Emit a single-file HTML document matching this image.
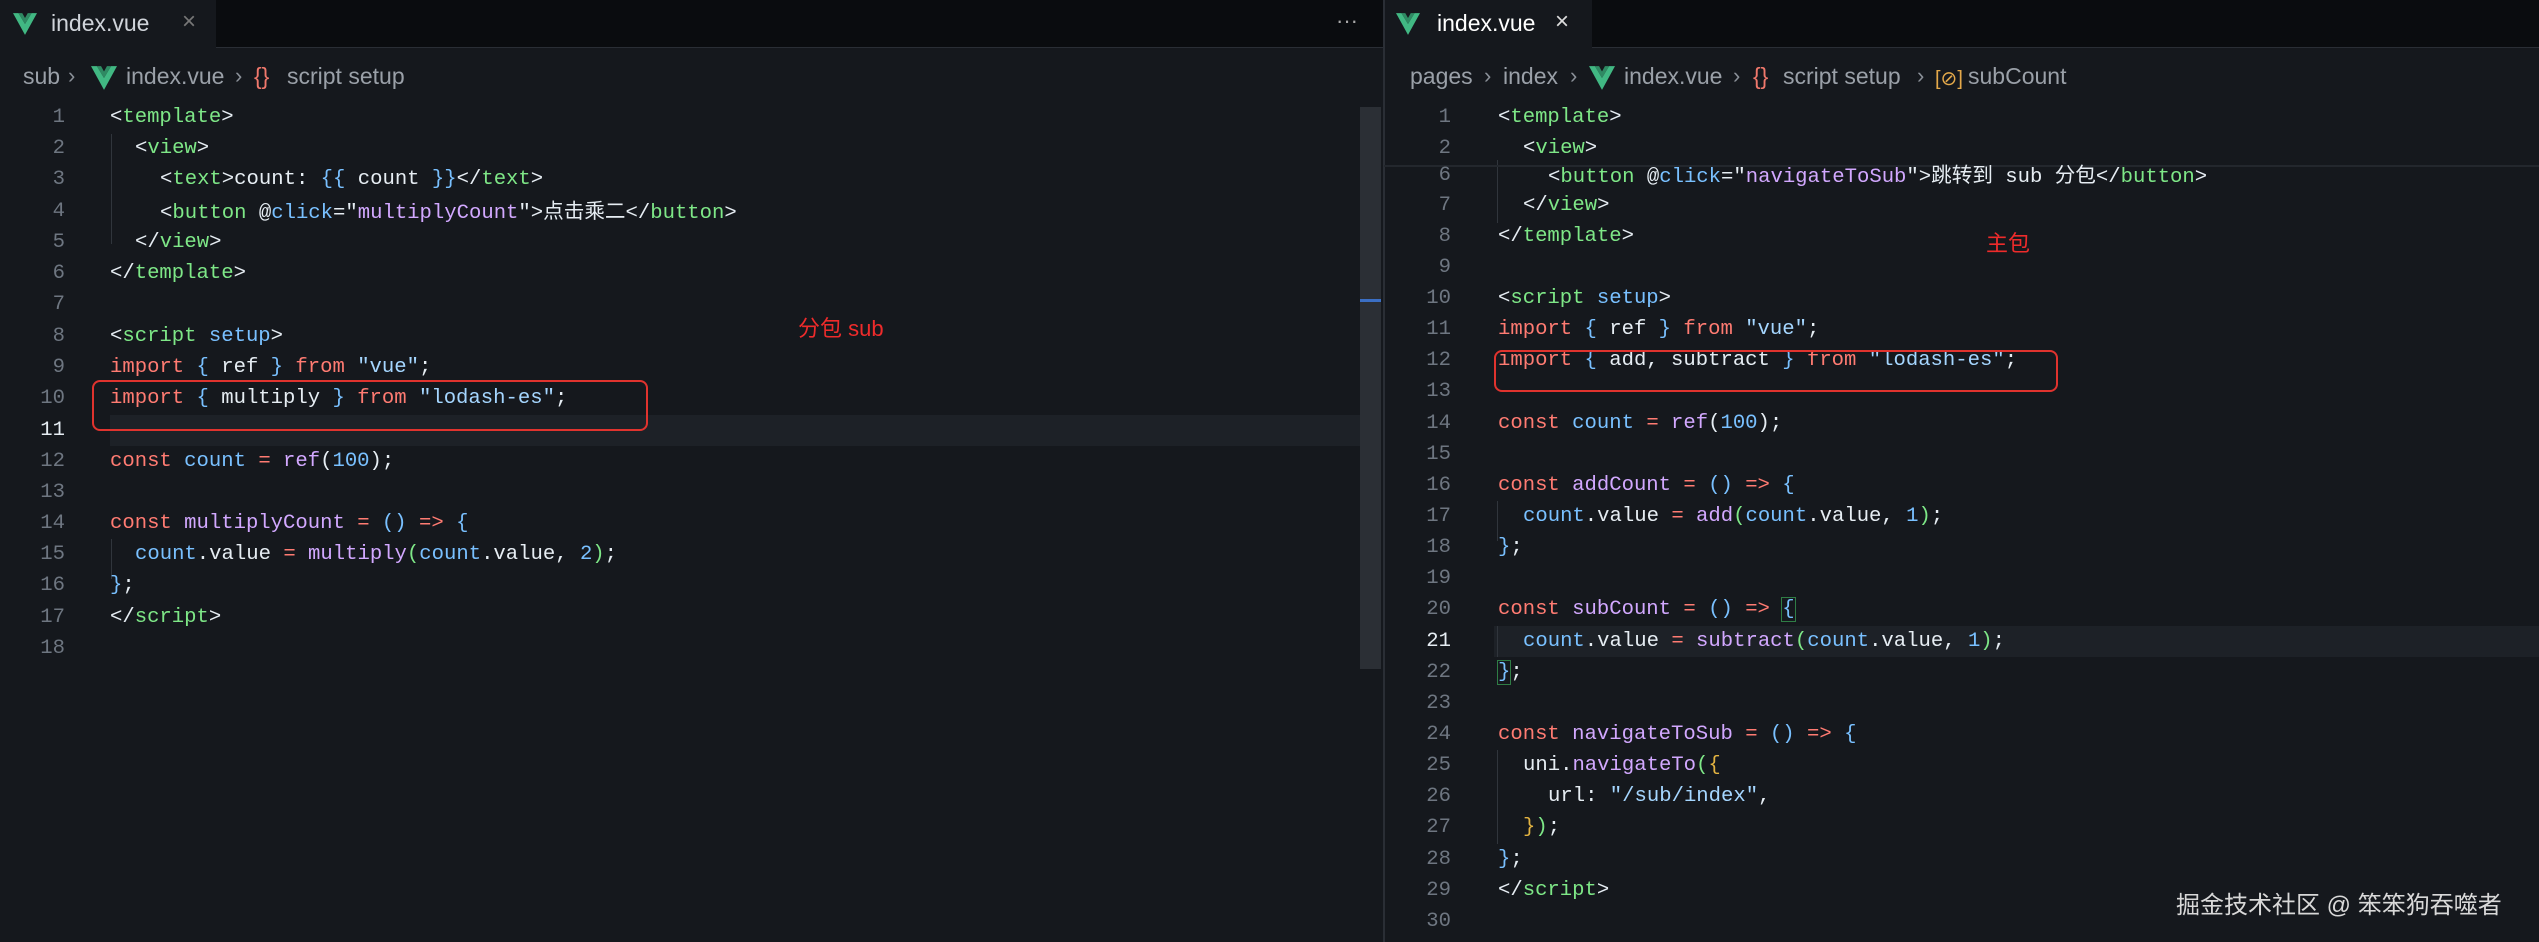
<!DOCTYPE html>
<html><head><meta charset="utf-8"><style>
*{margin:0;padding:0;box-sizing:border-box}
body{width:2539px;height:942px;background:#15181d;position:relative;overflow:hidden;font-family:"Liberation Mono","Noto Sans CJK SC",monospace;}
.tabbar{position:absolute;top:0;height:48px;background:#0a0c0f;border-bottom:1px solid #2a2e35}
.tab{position:absolute;top:0;height:49px;background:#15181d;font:23px "Liberation Sans",sans-serif;color:#d0d4da;}
.cb{position:absolute;top:63px;font:23px "Liberation Sans",sans-serif;color:#9aa0a8;white-space:pre}
.ch{position:absolute;top:63px;font:22px "Liberation Sans",sans-serif;color:#8a9098}
.ln{position:absolute;font-size:20.6px;color:#6e7681;text-align:right;width:50px;height:31px;line-height:31px}
.code{position:absolute;font-size:20.6px;color:#e6edf3;white-space:pre;height:31px;line-height:31px}
.k{color:#ff7b72}.t{color:#7ee787}.a{color:#79c0ff}.s{color:#a5d6ff}.f{color:#d2a8ff}.v{color:#79c0ff}.y{color:#e3b341}
.cjk{font-family:"Liberation Sans","Noto Sans CJK SC",sans-serif}
</style></head><body>
<div class="tabbar" style="left:0;width:1383px"></div>
<div class="tabbar" style="left:1384px;width:1155px"></div>
<div class="tab" style="left:0;width:216px"><svg style="position:absolute;left:13px;top:13px" width="24" height="22" viewBox="0 0 22 20"><path d="M0 0h5l6 10 6-10h5L11 20z" fill="#41b883"/><path d="M5 0h3.5L11 4.5 13.5 0H17l-6 10z" fill="#2f8a63"/></svg><span style="position:absolute;left:51px;top:10px">index.vue</span><span style="position:absolute;left:182px;top:8px;color:#777;font-size:24px">×</span></div>
<div style="position:absolute;left:1336px;top:8px;color:#aaa;font:22px 'Liberation Sans',sans-serif">···</div>
<div class="tab" style="left:1385px;width:207px"><svg style="position:absolute;left:11px;top:13px" width="24" height="22" viewBox="0 0 22 20"><path d="M0 0h5l6 10 6-10h5L11 20z" fill="#41b883"/><path d="M5 0h3.5L11 4.5 13.5 0H17l-6 10z" fill="#2f8a63"/></svg><span style="position:absolute;left:52px;top:10px;color:#fff">index.vue</span><span style="position:absolute;left:170px;top:8px;color:#ddd;font-size:24px">×</span></div>
<div style="position:absolute;left:1383px;top:0;width:2px;height:942px;background:#2a2e35"></div>

<!-- left breadcrumb -->
<div class="cb" style="left:23px">sub</div>
<div class="ch" style="left:68px">›</div>
<svg style="position:absolute;left:91px;top:66px" width="26" height="24" viewBox="0 0 22 20"><path d="M0 0h5l6 10 6-10h5L11 20z" fill="#41b883"/><path d="M5 0h3.5L11 4.5 13.5 0H17l-6 10z" fill="#2f8a63"/></svg>
<div class="cb" style="left:126px">index.vue</div>
<div class="ch" style="left:235px">›</div>
<div class="cb" style="left:254px;color:#f0786c">{}</div>
<div class="cb" style="left:287px">script setup</div>
<!-- right breadcrumb -->
<div class="cb" style="left:1410px">pages</div>
<div class="ch" style="left:1484px">›</div>
<div class="cb" style="left:1503px">index</div>
<div class="ch" style="left:1570px">›</div>
<svg style="position:absolute;left:1589px;top:66px" width="26" height="24" viewBox="0 0 22 20"><path d="M0 0h5l6 10 6-10h5L11 20z" fill="#41b883"/><path d="M5 0h3.5L11 4.5 13.5 0H17l-6 10z" fill="#2f8a63"/></svg>
<div class="cb" style="left:1624px">index.vue</div>
<div class="ch" style="left:1733px">›</div>
<div class="cb" style="left:1753px;color:#f0786c">{}</div>
<div class="cb" style="left:1783px">script setup</div>
<div class="ch" style="left:1917px">›</div>
<div class="cb" style="left:1935px;color:#e3a84a;font-size:20px;top:66px">[⊘]</div>
<div class="cb" style="left:1968px">subCount</div>

<!-- left scrollbar -->
<div style="position:absolute;left:1360px;top:107px;width:21px;height:562px;background:#2b2f35"></div>
<div style="position:absolute;left:1360px;top:299px;width:21px;height:3px;background:#3b6fc4"></div>
<!-- current lines -->
<div style="position:absolute;left:110px;top:415px;width:1250px;height:31px;background:#1d2127"></div>
<div style="position:absolute;left:1494px;top:626px;width:1045px;height:31px;background:#1d2127"></div>
<!-- indent guides -->
<div style="position:absolute;left:111px;top:134px;width:1px;height:110px;background:#30353c"></div>
<div style="position:absolute;left:111px;top:539px;width:1px;height:40px;background:#30353c"></div>
<div style="position:absolute;left:1497px;top:160px;width:1px;height:63px;background:#30353c"></div>
<div style="position:absolute;left:1497px;top:501px;width:1px;height:40px;background:#30353c"></div>
<div style="position:absolute;left:1497px;top:626px;width:1px;height:31px;background:#30353c"></div>
<div style="position:absolute;left:1497px;top:750px;width:1px;height:94px;background:#30353c"></div>
<div style="position:absolute;left:1384px;top:165px;width:1155px;height:2px;background:#23272d"></div>

<!-- LEFT CODE -->
<div class="ln" style="left:15px;top:102px">1</div><div class="code" style="left:110px;top:102px">&lt;<span class="t">template</span>&gt;</div>
<div class="ln" style="left:15px;top:133px">2</div><div class="code" style="left:135px;top:133px">&lt;<span class="t">view</span>&gt;</div>
<div class="ln" style="left:15px;top:164px">3</div><div class="code" style="left:160px;top:164px">&lt;<span class="t">text</span>&gt;count: <span class="a">{{</span> count <span class="a">}}</span>&lt;/<span class="t">text</span>&gt;</div>
<div class="ln" style="left:15px;top:196px">4</div><div class="code" style="left:160px;top:196px">&lt;<span class="t">button</span> @<span class="a">click</span>="<span class="f">multiplyCount</span>"&gt;<span class="cjk">点击乘二</span>&lt;/<span class="t">button</span>&gt;</div>
<div class="ln" style="left:15px;top:227px">5</div><div class="code" style="left:135px;top:227px">&lt;/<span class="t">view</span>&gt;</div>
<div class="ln" style="left:15px;top:258px">6</div><div class="code" style="left:110px;top:258px">&lt;/<span class="t">template</span>&gt;</div>
<div class="ln" style="left:15px;top:289px">7</div>
<div class="ln" style="left:15px;top:321px">8</div><div class="code" style="left:110px;top:321px">&lt;<span class="t">script</span> <span class="a">setup</span>&gt;</div>
<div class="ln" style="left:15px;top:352px">9</div><div class="code" style="left:110px;top:352px"><span class="k">import</span> <span class="a">{</span> ref <span class="a">}</span> <span class="k">from</span> <span class="s">"vue"</span>;</div>
<div class="ln" style="left:15px;top:383px">10</div><div class="code" style="left:110px;top:383px"><span class="k">import</span> <span class="a">{</span> multiply <span class="a">}</span> <span class="k">from</span> <span class="s">"lodash-es"</span>;</div>
<div class="ln" style="left:15px;top:415px;color:#e6edf3">11</div>
<div class="ln" style="left:15px;top:446px">12</div><div class="code" style="left:110px;top:446px"><span class="k">const</span> <span class="v">count</span> <span class="k">=</span> <span class="f">ref</span>(<span class="a">100</span>);</div>
<div class="ln" style="left:15px;top:477px">13</div>
<div class="ln" style="left:15px;top:508px">14</div><div class="code" style="left:110px;top:508px"><span class="k">const</span> <span class="f">multiplyCount</span> <span class="k">=</span> <span class="a">()</span> <span class="k">=&gt;</span> <span class="a">{</span></div>
<div class="ln" style="left:15px;top:539px">15</div><div class="code" style="left:135px;top:539px"><span class="v">count</span>.value <span class="k">=</span> <span class="f">multiply</span><span class="t">(</span><span class="v">count</span>.value, <span class="a">2</span><span class="t">)</span>;</div>
<div class="ln" style="left:15px;top:570px">16</div><div class="code" style="left:110px;top:570px"><span class="a">}</span>;</div>
<div class="ln" style="left:15px;top:602px">17</div><div class="code" style="left:110px;top:602px">&lt;/<span class="t">script</span>&gt;</div>
<div class="ln" style="left:15px;top:633px">18</div>

<div style="position:absolute;left:92px;top:380px;width:556px;height:51px;border:2px solid #e0332e;border-radius:8px"></div>
<div class="cjk" style="position:absolute;left:798px;top:311px;color:#ee2b2b;font-size:22px">分包 sub</div>

<!-- RIGHT CODE -->
<div class="ln" style="left:1401px;top:102px">1</div><div class="code" style="left:1498px;top:102px">&lt;<span class="t">template</span>&gt;</div>
<div class="ln" style="left:1401px;top:133px">2</div><div class="code" style="left:1523px;top:133px">&lt;<span class="t">view</span>&gt;</div>
<div class="ln" style="left:1401px;top:160px">6</div><div class="code" style="left:1548px;top:160px">&lt;<span class="t">button</span> @<span class="a">click</span>="<span class="f">navigateToSub</span>"&gt;<span class="cjk">跳转到</span> sub <span class="cjk">分包</span>&lt;/<span class="t">button</span>&gt;</div>
<div class="ln" style="left:1401px;top:190px">7</div><div class="code" style="left:1523px;top:190px">&lt;/<span class="t">view</span>&gt;</div>
<div class="ln" style="left:1401px;top:221px">8</div><div class="code" style="left:1498px;top:221px">&lt;/<span class="t">template</span>&gt;</div>
<div class="ln" style="left:1401px;top:252px">9</div>
<div class="ln" style="left:1401px;top:283px">10</div><div class="code" style="left:1498px;top:283px">&lt;<span class="t">script</span> <span class="a">setup</span>&gt;</div>
<div class="ln" style="left:1401px;top:314px">11</div><div class="code" style="left:1498px;top:314px"><span class="k">import</span> <span class="a">{</span> ref <span class="a">}</span> <span class="k">from</span> <span class="s">"vue"</span>;</div>
<div class="ln" style="left:1401px;top:345px">12</div><div class="code" style="left:1498px;top:345px"><span class="k">import</span> <span class="a">{</span> add, subtract <span class="a">}</span> <span class="k">from</span> <span class="s">"lodash-es"</span>;</div>
<div class="ln" style="left:1401px;top:376px">13</div>
<div class="ln" style="left:1401px;top:408px">14</div><div class="code" style="left:1498px;top:408px"><span class="k">const</span> <span class="v">count</span> <span class="k">=</span> <span class="f">ref</span>(<span class="a">100</span>);</div>
<div class="ln" style="left:1401px;top:439px">15</div>
<div class="ln" style="left:1401px;top:470px">16</div><div class="code" style="left:1498px;top:470px"><span class="k">const</span> <span class="f">addCount</span> <span class="k">=</span> <span class="a">()</span> <span class="k">=&gt;</span> <span class="a">{</span></div>
<div class="ln" style="left:1401px;top:501px">17</div><div class="code" style="left:1523px;top:501px"><span class="v">count</span>.value <span class="k">=</span> <span class="f">add</span><span class="t">(</span><span class="v">count</span>.value, <span class="a">1</span><span class="t">)</span>;</div>
<div class="ln" style="left:1401px;top:532px">18</div><div class="code" style="left:1498px;top:532px"><span class="a">}</span>;</div>
<div class="ln" style="left:1401px;top:563px">19</div>
<div class="ln" style="left:1401px;top:594px">20</div><div class="code" style="left:1498px;top:594px"><span class="k">const</span> <span class="f">subCount</span> <span class="k">=</span> <span class="a">()</span> <span class="k">=&gt;</span> <span class="a" style="outline:1px solid #2f7d45">{</span></div>
<div class="ln" style="left:1401px;top:626px;color:#e6edf3">21</div><div class="code" style="left:1523px;top:626px"><span class="v">count</span>.value <span class="k">=</span> <span class="f">subtract</span><span class="t">(</span><span class="v">count</span>.value, <span class="a">1</span><span class="t">)</span>;</div>
<div class="ln" style="left:1401px;top:657px">22</div><div class="code" style="left:1498px;top:657px"><span class="a" style="outline:1px solid #2f7d45">}</span>;</div>
<div class="ln" style="left:1401px;top:688px">23</div>
<div class="ln" style="left:1401px;top:719px">24</div><div class="code" style="left:1498px;top:719px"><span class="k">const</span> <span class="f">navigateToSub</span> <span class="k">=</span> <span class="a">()</span> <span class="k">=&gt;</span> <span class="a">{</span></div>
<div class="ln" style="left:1401px;top:750px">25</div><div class="code" style="left:1523px;top:750px">uni.<span class="f">navigateTo</span><span class="t">(</span><span class="y">{</span></div>
<div class="ln" style="left:1401px;top:781px">26</div><div class="code" style="left:1548px;top:781px">url: <span class="s">"/sub/index"</span>,</div>
<div class="ln" style="left:1401px;top:812px">27</div><div class="code" style="left:1523px;top:812px"><span class="y">}</span><span class="t">)</span>;</div>
<div class="ln" style="left:1401px;top:844px">28</div><div class="code" style="left:1498px;top:844px"><span class="a">}</span>;</div>
<div class="ln" style="left:1401px;top:875px">29</div><div class="code" style="left:1498px;top:875px">&lt;/<span class="t">script</span>&gt;</div>
<div class="ln" style="left:1401px;top:906px">30</div>

<div style="position:absolute;left:1494px;top:350px;width:564px;height:42px;border:2px solid #e0332e;border-radius:8px"></div>
<div class="cjk" style="position:absolute;left:1986px;top:226px;color:#ee2b2b;font-size:22px">主包</div>
<div class="cjk" style="position:absolute;left:2176px;top:885px;color:#d8d8d8;font-size:24px">掘金技术社区 @ 笨笨狗吞噬者</div>
</body></html>
